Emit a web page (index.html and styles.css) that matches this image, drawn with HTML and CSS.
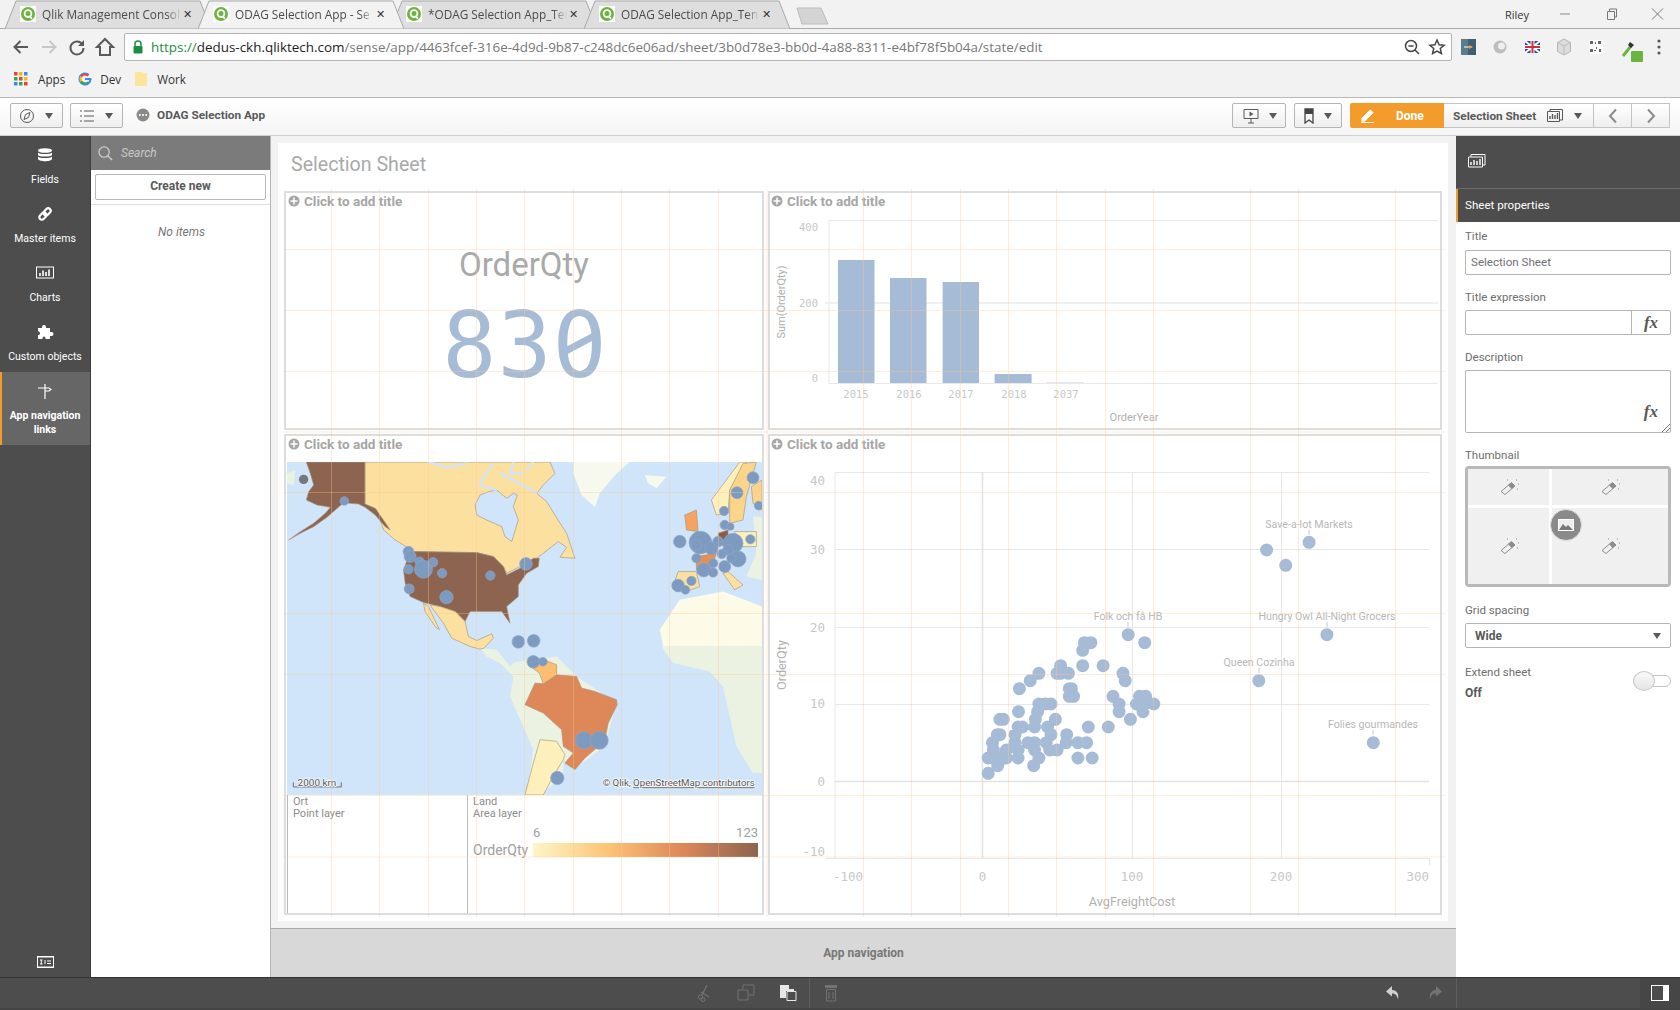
FILE: index.html
```html
<!DOCTYPE html>
<html lang="en">
<head>
<meta charset="utf-8">
<title>ODAG Selection App</title>
<link rel="stylesheet" href="styles.css">
</head>
<body>
<div class="app">

<!-- Browser tab strip -->
<header class="tabbar">
  <div class="tab">
    <svg class="tab-shape" viewBox="0 0 206 29"><path d="M0 29 11 1H195L206 29Z"/></svg>
    <svg class="favicon" viewBox="0 0 16 16"><rect width="16" height="16" fill="#fff"/><circle cx="8" cy="8" r="7" fill="#6cb33f"/><circle cx="8" cy="7.6" r="3.4" fill="none" stroke="#fff" stroke-width="1.8"/><path d="M9.5 10l2.4 2.6" stroke="#fff" stroke-width="1.8"/></svg>
    <span class="tab-text">Qlik Management Consol</span>
    <span class="tab-close">✕</span>
  </div>
  <div class="tab tab-active">
    <svg class="tab-shape" viewBox="0 0 206 29"><path d="M0 29 11 1H195L206 29Z"/></svg>
    <svg class="favicon" viewBox="0 0 16 16"><rect width="16" height="16" fill="#fff"/><circle cx="8" cy="8" r="7" fill="#6cb33f"/><circle cx="8" cy="7.6" r="3.4" fill="none" stroke="#fff" stroke-width="1.8"/><path d="M9.5 10l2.4 2.6" stroke="#fff" stroke-width="1.8"/></svg>
    <span class="tab-text">ODAG Selection App - Se</span>
    <span class="tab-close">✕</span>
  </div>
  <div class="tab">
    <svg class="tab-shape" viewBox="0 0 206 29"><path d="M0 29 11 1H195L206 29Z"/></svg>
    <svg class="favicon" viewBox="0 0 16 16"><rect width="16" height="16" fill="#fff"/><circle cx="8" cy="8" r="7" fill="#6cb33f"/><circle cx="8" cy="7.6" r="3.4" fill="none" stroke="#fff" stroke-width="1.8"/><path d="M9.5 10l2.4 2.6" stroke="#fff" stroke-width="1.8"/></svg>
    <span class="tab-text">*ODAG Selection App_Ten</span>
    <span class="tab-close">✕</span>
  </div>
  <div class="tab">
    <svg class="tab-shape" viewBox="0 0 206 29"><path d="M0 29 11 1H195L206 29Z"/></svg>
    <svg class="favicon" viewBox="0 0 16 16"><rect width="16" height="16" fill="#fff"/><circle cx="8" cy="8" r="7" fill="#6cb33f"/><circle cx="8" cy="7.6" r="3.4" fill="none" stroke="#fff" stroke-width="1.8"/><path d="M9.5 10l2.4 2.6" stroke="#fff" stroke-width="1.8"/></svg>
    <span class="tab-text">ODAG Selection App_Ten</span>
    <span class="tab-close">✕</span>
  </div>
  <svg class="newtab" viewBox="0 0 33 18"><path d="M1 1H25L32 17H6Z"/></svg>
  <div class="winctl">
    <span class="win-user">Riley</span>
    <svg class="win-ic" viewBox="0 0 46 16"><path d="M18 8H28" stroke="#8a8a8a"/></svg>
    <svg class="win-ic" viewBox="0 0 46 16"><path d="M19.500 5.500h7v8h-7zM21.500 5.500v-2.500h7v8h-2" fill="none" stroke="#777"/></svg>
    <svg class="win-ic" viewBox="0 0 46 16"><path d="M18 2.500 29 13.500M29 2.500 18 13.500" stroke="#777"/></svg>
  </div>
</header>

<!-- Address bar -->
<div class="addrbar">
  <svg class="nav-ic" viewBox="0 0 28 28"><path d="M21 14H8M13.500 8 7.500 14l6 6" fill="none" stroke="#5a5a5a" stroke-width="2"/></svg>
  <svg class="nav-ic" viewBox="0 0 28 28"><path d="M7 14H20M14.500 8l6 6-6 6" fill="none" stroke="#c8c8c8" stroke-width="2"/></svg>
  <svg class="nav-ic" viewBox="0 0 28 28"><path d="M19.500 11.500A6.500 6.500 0 1 0 20.500 15" fill="none" stroke="#5a5a5a" stroke-width="2"/><path d="M21 7v6h-6z" fill="#5a5a5a"/></svg>
  <svg class="nav-ic" viewBox="0 0 28 28"><path d="M14 6 6 14h3v8h10v-8h3z" fill="none" stroke="#5a5a5a" stroke-width="2"/></svg>
  <div class="urlbox">
    <svg class="lock" viewBox="0 0 12 14"><path d="M3 6V4a3 3 0 0 1 6 0v2" fill="none" stroke="#1e8e3e" stroke-width="1.500"/><rect x="1.500" y="6" width="9" height="7.500" rx="1" fill="#1e8e3e"/></svg>
    <span class="url"><span class="url-scheme">https://</span><span class="url-host">dedus-ckh.qliktech.com</span>/sense/app/4463fcef-316e-4d9d-9b87-c248dc6e06ad/sheet/3b0d78e3-bb0d-4a88-8311-e4bf78f5b04a/state/edit</span>
    <svg class="url-ic" viewBox="0 0 18 18"><circle cx="8" cy="8" r="5.500" fill="none" stroke="#444" stroke-width="1.500"/><path d="M5.500 8h5M12 12l4 4" stroke="#444" stroke-width="1.500"/></svg>
    <svg class="url-ic" viewBox="0 0 18 18"><path d="M9 2l2.100 4.700 5 .5-3.800 3.300 1.100 5L9 13l-4.400 2.500 1.100-5L1.900 7.200l5-.5z" fill="none" stroke="#444" stroke-width="1.500"/></svg>
  </div>
  <div class="exts">
    <svg class="ext" viewBox="0 0 32 18"><rect x="9" y="1" width="15" height="16" fill="#3f5f72"/><rect x="9" y="1" width="7" height="16" fill="#5b7b8e"/><path d="M12 9h8" stroke="#fff"/><path d="M17 7l4 2-4 2z" fill="#f39c2b"/></svg>
    <svg class="ext" viewBox="0 0 32 18"><circle cx="16" cy="9" r="6.500" fill="#bdbdbd"/><circle cx="17.500" cy="8" r="3.500" fill="#eee"/></svg>
    <svg class="ext" viewBox="0 0 32 18"><rect x="9" y="3" width="15" height="12" fill="#2b4a8b"/><path d="M9 3 24 15M24 3 9 15" stroke="#fff" stroke-width="2"/><path d="M16.500 3v12M9 9h15" stroke="#fff" stroke-width="4"/><path d="M16.500 3v12M9 9h15" stroke="#cf2e3a" stroke-width="2"/></svg>
    <svg class="ext" viewBox="0 0 32 18"><path d="M16 1l6.500 3.500v9L16 17l-6.500-3.500v-9z" fill="#dcdcdc" stroke="#b5b5b5"/><path d="M16 8v9M9.500 4.500 16 8l6.500-3.500" fill="none" stroke="#bdbdbd"/></svg>
    <svg class="ext" viewBox="0 0 32 18"><rect x="9" y="2" width="14" height="14" fill="#fff"/><path d="M10 3h3v3h-3zM18 3h3v3h-3zM10 11h3v3h-3zM16 9h1v2h-1zM19 11h2v3h-2zM15 4h1v2h-1zM14 12h2v1h-2z" fill="#666"/></svg>
    <svg class="ext" viewBox="0 0 32 24"><path d="M11 18 19 8" stroke="#6cb33f" stroke-width="3"/><path d="M18 4l4 3-3 3-3-3z" fill="#333"/><rect x="19" y="13" width="12" height="11" rx="1" fill="#6cb33f"/></svg>
    <svg class="ext ext-menu" viewBox="0 0 30 18"><circle cx="15" cy="3" r="1.600" fill="#5a5a5a"/><circle cx="15" cy="9" r="1.600" fill="#5a5a5a"/><circle cx="15" cy="15" r="1.600" fill="#5a5a5a"/></svg>
  </div>
</div>

<!-- Bookmarks -->
<div class="bookmarks">
  <svg class="bm-apps" viewBox="0 0 14 14"><path d="M0 0h3.500v3.500H0z" fill="#e94335"/><path d="M5 0h3.500v3.500H5z" fill="#fbbc05"/><path d="M10 0h3.500v3.500H10z" fill="#4285f4"/><path d="M0 5h3.500v3.500H0z" fill="#34a853"/><path d="M5 5h3.500v3.500H5z" fill="#e94335"/><path d="M10 5h3.500v3.500H10z" fill="#fbbc05"/><path d="M0 10h3.500v3.500H0z" fill="#4285f4"/><path d="M5 10h3.500v3.500H5z" fill="#34a853"/><path d="M10 10h3.500v3.500H10z" fill="#e94335"/></svg>
  <span class="bm-text bm-apps-t">Apps</span>
  <svg class="bm-g" viewBox="0 0 14 14"><path d="M7 7h5.500A5.500 5.500 0 1 1 10.800 3" fill="none" stroke="#4285f4" stroke-width="2"/><path d="M10.800 3A5.500 5.500 0 0 0 2.400 4L4 5.300A3.500 3.500 0 0 1 9.500 4.600z" fill="#ea4335"/><path d="M2.400 4a5.500 5.500 0 0 0 0 6l1.700-1.300a3.500 3.500 0 0 1 0-3.400z" fill="#fbbc05"/><path d="M2.400 10a5.500 5.500 0 0 0 8.500.9L9.400 9.500a3.500 3.500 0 0 1-5.300-.8z" fill="#34a853"/></svg>
  <span class="bm-text bm-dev">Dev</span>
  <svg class="bm-folder" viewBox="0 0 12 14"><path d="M0 0h7l1 1h4v13H0z" fill="#fce49c"/></svg>
  <span class="bm-text">Work</span>
</div>

<!-- Qlik toolbar -->
<div class="apptoolbar">
  <button class="tbtn tbtn-a">
    <svg class="tb-ic" viewBox="0 0 16 16"><circle cx="8" cy="8" r="6.500" fill="none" stroke="#595959"/><path d="M11 4.500 9.500 9.500 5 11.500 6.500 6.500z" fill="none" stroke="#595959"/></svg>
    <span class="caret"></span>
  </button>
  <button class="tbtn tbtn-a tbtn-list">
    <svg class="tb-ic" viewBox="0 0 16 16"><path d="M1 3h2M5 3h10M1 8h2M5 8h10M1 13h2M5 13h10" stroke="#595959"/></svg>
    <span class="caret"></span>
  </button>
  <svg class="app-sphere" viewBox="0 0 14 14"><circle cx="7" cy="7" r="6.500" fill="#8a8a8a"/><circle cx="3.800" cy="7" r="1" fill="#fff"/><circle cx="7" cy="7" r="1" fill="#fff"/><circle cx="10.200" cy="7" r="1" fill="#fff"/></svg>
  <span class="app-name">ODAG Selection App</span>
  <div class="tb-right">
    <button class="tbtn tbtn-present">
      <svg class="tb-ic" viewBox="0 0 16 16"><path d="M1 1.500h14v9H1zM8 10.500V15M5 15h6" fill="none" stroke="#595959"/><path d="M6.500 3.500l4 2.500-4 2.500z" fill="#595959"/></svg>
      <span class="caret"></span>
    </button>
    <button class="tbtn tbtn-mark">
      <svg class="tb-ic" viewBox="0 0 16 16"><path d="M4 1h8v14l-4-3-4 3z" fill="none" stroke="#444" stroke-width="1.300"/><path d="M4 1h8v5H4z" fill="#444"/></svg>
      <span class="caret"></span>
    </button>
    <div class="tgroup">
      <button class="t-done">
        <svg class="done-ic" viewBox="0 0 16 16"><path d="M2 11 11 2l3 3-9 9H2zM1 15.500h14" fill="#fff" stroke="#fff"/></svg>
        <span class="done-text">Done</span>
      </button>
      <button class="t-sheet">
        <span class="t-sheet-name">Selection Sheet</span>
        <svg class="sheet-ic" viewBox="0 0 16 14"><path d="M.500 2.500h12v10h-12zM3 2V.500h12.500V11H13" fill="none" stroke="#595959"/><path d="M3 10V7M5.500 10V5M8 10V6M10.500 10V4" stroke="#595959" stroke-width="1.400"/></svg>
        <span class="caret"></span>
      </button>
      <button class="t-nav"><svg class="nav-arrow" viewBox="0 0 10 16"><path d="M8 1.500 2 8l6 6.500" fill="none" stroke="#8c8c8c" stroke-width="2"/></svg></button>
      <button class="t-nav"><svg class="nav-arrow" viewBox="0 0 10 16"><path d="M2 1.500 8 8l-6 6.500" fill="none" stroke="#8c8c8c" stroke-width="2"/></svg></button>
    </div>
  </div>
</div>

<div class="workspace">

  <!-- Left navigation -->
  <nav class="sidebar">
    <div class="side-item">
      <svg class="side-ic" viewBox="0 0 16 14"><ellipse cx="8" cy="2.500" rx="7" ry="2.300" fill="#fff"/><path d="M1 4.500c1 2 13 2 14 0V7c-1 2-13 2-14 0zM1 8.500c1 2 13 2 14 0V11c-1 3-13 3-14 0z" fill="#fff"/></svg>
      <span class="side-label">Fields</span>
    </div>
    <div class="side-item">
      <svg class="side-ic" viewBox="0 0 16 14"><g fill="none" stroke="#fff" stroke-width="2.200" transform="rotate(-45 8 7)"><rect x="1" y="4.500" width="8" height="5" rx="2.500"/><rect x="7" y="4.500" width="8" height="5" rx="2.500"/></g></svg>
      <span class="side-label">Master items</span>
    </div>
    <div class="side-item">
      <svg class="side-ic" viewBox="0 0 18 14"><rect x=".500" y="1" width="17" height="11" fill="none" stroke="#fff"/><path d="M4 10V7M7 10V4.500M10 10V6M13 10V3.500" stroke="#fff" stroke-width="1.600"/></svg>
      <span class="side-label">Charts</span>
    </div>
    <div class="side-item">
      <svg class="side-ic" viewBox="0 0 16 14"><path d="M1 3h4V2a2 2 0 0 1 4 0v1h4v4h1.500a2 2 0 0 1 0 4H13v3H8.500v-1a1.500 1.500 0 0 0-3 0v1H1v-4h1a2 2 0 0 0 0-3.500H1z" fill="#fff"/></svg>
      <span class="side-label">Custom objects</span>
    </div>
    <div class="side-item side-active">
      <svg class="side-ic" viewBox="0 0 16 14"><path d="M8 0V15M1 4h11l2 1.500L12 7H8M3 4 1 4" fill="none" stroke="#fff" stroke-width="1.200"/></svg>
      <span class="side-label side-strong">App navigation links</span>
    </div>
    <svg class="side-foot" viewBox="0 0 17 12"><rect width="17" height="12" fill="#fff"/><rect x="1" y="1.500" width="15" height="9" fill="#4d4d4d"/><path d="M3 4h2.500M3 8h2.500M4.300 4v4M8 4v4M10 5h4M10 7.500h4" stroke="#fff"/></svg>
  </nav>

  <!-- Assets panel -->
  <aside class="assets">
    <div class="asset-search">
      <svg class="search-ic" viewBox="0 0 16 16"><circle cx="6.500" cy="6.500" r="5.500" fill="none" stroke="#ccc" stroke-width="1.300"/><path d="M10.500 10.500 15 15" stroke="#ccc" stroke-width="1.500"/></svg>
      <span class="search-text">Search</span>
    </div>
    <div class="asset-actions"><button class="create-btn">Create new</button></div>
    <p class="no-items">No items</p>
  </aside>

  <!-- Sheet -->
  <main class="main">
    <div class="sheet-wrap">
      <section class="sheet">
        <h1 class="sheet-title">Selection Sheet</h1>
        <div class="grid">

          <article class="object">
            <div class="obj-title"><svg class="plus" viewBox="0 0 12 12"><circle cx="6" cy="6" r="5.500" fill="#a6a6a6"/><path d="M2.500 6h7M6 2.500v7" stroke="#fff" stroke-width="1.500"/></svg>Click to add title</div>
            <div class="kpi">
              <div class="kpi-label">OrderQty</div>
              <div class="kpi-value">83<span class="kpi-zero">0</span></div>
            </div>
          </article>

          <article class="object">
            <div class="obj-title"><svg class="plus" viewBox="0 0 12 12"><circle cx="6" cy="6" r="5.500" fill="#a6a6a6"/><path d="M2.500 6h7M6 2.500v7" stroke="#fff" stroke-width="1.500"/></svg>Click to add title</div>
            <svg class="chart chart-bar" viewBox="770 219 668 209">
              <path class="grid-l" d="M829 220.500H1438M829 383.500H1438M829 220V384"/>
              <path class="grid-b" d="M825 303H1438"/>
              <path class="bar" d="M838 260h36.500v123H838zM890 278h36.500v105H890zM942.600 282H979v101h-36.400zM994.600 374h37v9h-37z"/>
              <path class="bar bar-faint" d="M1046.700 382h37v1.500h-37z"/>
              <g class="mono-s">
                <text x="818" y="231" text-anchor="end">400</text>
                <text x="818" y="307" text-anchor="end">200</text>
                <text x="818" y="382" text-anchor="end">0</text>
                <text x="856" y="398" text-anchor="middle">2015</text>
                <text x="909" y="398" text-anchor="middle">2016</text>
                <text x="961" y="398" text-anchor="middle">2017</text>
                <text x="1014" y="398" text-anchor="middle">2018</text>
                <text x="1066" y="398" text-anchor="middle">2037</text>
              </g>
              <text class="axis-t" x="1134" y="421" text-anchor="middle">OrderYear</text>
              <text class="axis-t" transform="translate(785 302) rotate(-90)" text-anchor="middle">Sum(OrderQty)</text>
            </svg>
          </article>

          <article class="object">
            <div class="obj-title"><svg class="plus" viewBox="0 0 12 12"><circle cx="6" cy="6" r="5.500" fill="#a6a6a6"/><path d="M2.500 6h7M6 2.500v7" stroke="#fff" stroke-width="1.500"/></svg>Click to add title</div>
            <svg class="map" viewBox="20 96 1427 1000">
              <rect x="20" y="96" width="1427" height="1000" fill="#d0e5fa"/>
              <!-- Pale land -->
              <path class="pale" d="M880 96H1050L1010 130 960 190 945 232 905 195 880 130Z"/>
              <path class="pale" d="M1095 135 1160 140 1130 175 1105 160Z"/>
              <path class="sand" d="M1140 600 1200 510 1330 485 1447 530V650H1150Z"/>
              <path class="green" d="M1145 650H1447V1030H1420L1370 950 1330 770 1290 725 1180 700Z"/>
              <path class="green" d="M1420 260H1447V450L1400 440 1430 370Z"/>
              <path class="green" d="M600 655 650 660 690 710 700 700 740 690 830 680 890 740 1010 820 975 950 880 1020 850 990 850 1040 780 1096H740L760 960 690 800 700 740 660 700 620 680Z"/>
              <path class="green" d="M20 130 45 120 40 165 20 160Z"/>
              <!-- Choropleth -->
              <g class="coast">
                <path fill="#fce0a0" d="M254 96H810L825 130 790 165 770 190 800 215 825 255 860 310 885 385 840 382 860 352 835 335 790 370 770 385 720 410 680 430 670 410 640 380 590 368 400 365 370 345 345 330 310 300 290 240 254 222Z"/>
                <path fill="#d0e5fa" d="M585 225 600 195 625 185 650 180 680 205 700 190 712 195 700 230 715 270 695 335 675 320 665 290 620 270 590 255Z"/>
                <path class="channel" d="M445 96 500 112 560 100M640 100 610 140 600 165 650 180M660 130 700 150 770 190M700 96 690 130 730 130M760 96 740 120"/>
                <path fill="#8c6450" d="M78 96H254V222L285 235 320 285 330 300 315 290 285 255 255 232 235 222 190 218 165 240 140 262 100 290 60 310 25 330 60 305 100 280 135 250 150 232 110 225 78 210 85 185 100 165 90 130Z"/>
                <path fill="#8c6450" d="M400 365 590 368 640 380 670 410 680 435 720 415 760 385 778 385 775 410 740 430 715 465 715 500 680 530 690 580 665 545 620 545 570 545 555 575 525 545 480 530 430 518 390 500 375 460 370 420 385 380Z"/>
                <path fill="#fce0a0" d="M450 525 480 530 525 545 555 575 565 620 590 632 635 612 640 625 612 655 600 658 570 650 515 625 490 580 460 540Z"/>
                <path fill="#fce0a0" d="M430 520 445 530 478 600 465 590 435 545Z"/>
                <path fill="#de8859" d="M890 740 905 775 945 785 1010 810 1012 825 985 880 975 930 950 955 915 985 885 1020 855 1000 880 970 850 950 845 900 790 850 735 825 765 760 790 762 830 735Z"/>
                <path fill="#fdbe6f" d="M745 705 780 685 830 705 830 735 790 762 778 730Z"/>
                <path fill="#fdf0bb" d="M780 930 830 935 855 975 850 990 820 1040 790 1096H735L760 1000Z"/>
                <path fill="#fdf0bb" d="M1295 210 1380 96H1400L1350 180 1345 250 1310 255Z"/>
                <path fill="#fcd58a" d="M1350 180 1390 100 1430 96 1400 200 1390 270 1350 280Z"/>
                <path fill="#fcd58a" d="M1415 170 1447 150V240L1420 220Z"/>
                <path fill="#f4a460" d="M1215 255 1250 240 1255 305 1220 300Z"/>
                <path fill="#fdf0bb" d="M1365 305 1430 305 1430 350 1375 350Z"/>
                <path fill="#ed8d50" d="M1250 380 1310 370 1290 430 1250 420Z"/>
                <path fill="#8c5a45" d="M1315 310 1345 300 1345 350 1320 345Z"/>
                <path fill="#fce0a0" d="M1195 425 1250 425 1260 470 1220 485 1180 470Z"/>
                <path fill="#fce0a0" d="M1345 425 1390 465 1365 480 1330 430Z"/>
              </g>
              <!-- Bubbles -->
              <circle class="bub-dim" cx="70" cy="148" r="14"/>
              <g class="bub">
                <circle cx="192" cy="213" r="13"/><circle cx="385" cy="365" r="16"/><circle cx="390" cy="380" r="18"/><circle cx="385" cy="418" r="14"/><circle cx="418" cy="395" r="14"/><circle cx="430" cy="418" r="27"/><circle cx="459" cy="397" r="14"/><circle cx="486" cy="430" r="14"/><circle cx="387" cy="477" r="15"/><circle cx="499" cy="502" r="20"/><circle cx="631" cy="437" r="14"/><circle cx="738" cy="402" r="19"/>
                <circle cx="715" cy="636" r="19"/><circle cx="761" cy="633" r="19"/><circle cx="760" cy="696" r="19"/><circle cx="789" cy="696" r="13"/>
                <circle cx="912" cy="932" r="26"/><circle cx="958" cy="932" r="27"/><circle cx="832" cy="1045" r="20"/>
                <circle cx="1420" cy="143" r="18"/><circle cx="1372" cy="188" r="18"/><circle cx="1437" cy="227" r="13"/><circle cx="1333" cy="243" r="14"/><circle cx="1335" cy="285" r="14"/><circle cx="1352" cy="290" r="11"/><circle cx="1412" cy="328" r="14"/><circle cx="1200" cy="335" r="19"/><circle cx="1262" cy="338" r="34"/><circle cx="1250" cy="345" r="16"/><circle cx="1295" cy="355" r="20"/><circle cx="1315" cy="335" r="16"/><circle cx="1360" cy="340" r="30"/><circle cx="1345" cy="360" r="16"/><circle cx="1250" cy="385" r="14"/><circle cx="1300" cy="400" r="14"/><circle cx="1326" cy="372" r="14"/><circle cx="1375" cy="387" r="24"/><circle cx="1355" cy="385" r="14"/><circle cx="1335" cy="410" r="18"/><circle cx="1272" cy="420" r="21"/><circle cx="1300" cy="428" r="14"/><circle cx="1195" cy="467" r="19"/><circle cx="1217" cy="480" r="13"/><circle cx="1235" cy="453" r="14"/>
              </g>
              <path class="scale" d="M39 1058v14H183V1058"/>
              <text class="map-t" x="110" y="1069" text-anchor="middle">2000 km</text>
              <text class="map-t map-credit" x="1425" y="1070" text-anchor="end">© Qlik, <tspan class="map-link">OpenStreetMap contributors</tspan></text>
            </svg>
            <div class="legend">
              <div class="leg-col leg-left">
                <div class="leg-name">Ort</div>
                <div class="leg-name">Point layer</div>
              </div>
              <div class="leg-col leg-right">
                <div class="leg-name">Land</div>
                <div class="leg-name">Area layer</div>
                <div class="scale-range"><span>6</span><span>123</span></div>
                <div class="scale-row"><span class="scale-name">OrderQty</span><span class="scale-bar"></span></div>
              </div>
            </div>
          </article>

          <article class="object">
            <div class="obj-title"><svg class="plus" viewBox="0 0 12 12"><circle cx="6" cy="6" r="5.500" fill="#a6a6a6"/><path d="M2.500 6h7M6 2.500v7" stroke="#fff" stroke-width="1.500"/></svg>Click to add title</div>
            <svg class="chart chart-scatter" viewBox="770 462 668 450">
              <path class="grid-l" d="M835 472.500H1429M835 549.500H1429M835 627.500H1429M835 704.500H1429M835 858.500H1429M835 472V858M1132.500 472V858M1281.500 472V858M1429.500 858V865M825 858.500H835"/>
              <path class="grid-z" d="M835 781.500H1429M982.500 472V858"/>
              <path class="dots" d="M988.200 773.300h0M997.700 765.700h0M1033.700 765.700h0M988.200 758h0M1006.400 758h0M1018.100 758h0M1038.900 758h0M1077.900 758h0M1092.200 758h0M999.900 758h0M993.400 750h0M1006.400 750h0M1018.100 750h0M1034.600 750h0M1049.700 750h0M1057.100 750h0M992.500 742.700h0M1015 742.700h0M1028 742.700h0M1034.600 742.700h0M1046.300 742.700h0M1066.200 742.700h0M1077.900 742.700h0M1086.600 742.700h0M999.900 734.700h0M997.300 734.700h0M1015 734.700h0M1051 734.700h0M1066.700 734.700h0M1018.100 727h0M1022.400 727h0M1034.600 727h0M1047.600 727h0M1088.300 727h0M1108.300 727h0M999.900 719.300h0M1003.300 719.300h0M1035.400 719.300h0M1055.400 719.300h0M1130.400 719.300h0M1018.500 711.700h0M1037.600 711.700h0M1119.100 711.700h0M1143 711.700h0M1038.900 704h0M1045.400 704h0M1051 704h0M1119.100 704h0M1136.500 704h0M1153.800 704h0M1145.100 704h0M1069.300 696.300h0M1073.600 696.300h0M1113 696.300h0M1139.500 696.300h0M1145.600 696.300h0M1019.400 688.700h0M1069.300 688.700h0M1071.400 688.700h0M1030.200 680.700h0M1125.200 680.700h0M1258.800 680.700h0M1038.900 673.300h0M1057.100 673.300h0M1060.600 673.300h0M1068.400 673.300h0M1123 673.300h0M1060.600 665.700h0M1082.700 665.700h0M1103.100 665.700h0M1082.700 650.300h0M1084.400 642.700h0M1090.900 642.700h0M1144.700 642.700h0M1128.200 634.700h0M1326.900 634.700h0M1373.300 742.700h0M1285.700 565.300h0M1266.600 550h0M1309.100 542.300h0"/>
              <path class="ticks" d="M1309 530v5M1128 622v5M1327 622v5M1259 668v5M1373 730v5"/>
              <g class="dot-label">
                <text x="1309" y="528" text-anchor="middle">Save-a-lot Markets</text>
                <text x="1128" y="620" text-anchor="middle">Folk och få HB</text>
                <text x="1327" y="620" text-anchor="middle">Hungry Owl All-Night Grocers</text>
                <text x="1259" y="666" text-anchor="middle">Queen Cozinha</text>
                <text x="1373" y="728" text-anchor="middle">Folies gourmandes</text>
              </g>
              <g class="mono-m">
                <text x="825" y="485" text-anchor="end">40</text>
                <text x="825" y="554" text-anchor="end">30</text>
                <text x="825" y="632" text-anchor="end">20</text>
                <text x="825" y="708" text-anchor="end">10</text>
                <text x="825" y="786" text-anchor="end">0</text>
                <text x="825" y="856" text-anchor="end">-10</text>
                <text x="848" y="881" text-anchor="middle">-100</text>
                <text x="982.500" y="881" text-anchor="middle">0</text>
                <text x="1132" y="881" text-anchor="middle">100</text>
                <text x="1281" y="881" text-anchor="middle">200</text>
                <text x="1429" y="881" text-anchor="end">300</text>
              </g>
              <text class="axis-m" x="1132" y="906" text-anchor="middle">AvgFreightCost</text>
              <text class="axis-m" transform="translate(786 665) rotate(-90)" text-anchor="middle">OrderQty</text>
            </svg>
          </article>
        </div>

        <!-- Edit-mode snapping grid, drawn over the objects -->
        <svg class="snap-grid" viewBox="278 143 1170 778">
          <path class="snap-h" d="M283 249.500H1445M283 310.500H1445M283 371.500H1445M283 432H1445M283 492.500H1445M283 613.500H1445M283 674.500H1445M283 795.500H1445M283 857H1445"/>
          <path class="snap-v" d="M331.500 189V917M379.500 189V917M428.500 189V917M476.500 189V917M524.500 189V917M573.500 189V917M621.500 189V917M669.500 189V917M718.500 189V917M767 189V917M863.500 189V917M911.500 189V917M960.500 189V917M1008.500 189V917M1056.500 189V917M1105.500 189V917M1153.500 189V917M1250.500 189V917M1298.500 189V917M1395.500 189V917"/>
        </svg>
      </section>
    </div>
    <div class="appnav">App navigation</div>
  </main>

  <!-- Properties panel -->
  <aside class="props">
    <div class="props-head">
      <svg class="props-ic" viewBox="0 0 18 14"><path d="M.500 3h14v10H.500z" fill="#4d4d4d" stroke="#fff"/><path d="M3 2.500V.500h14V11h-2" fill="none" stroke="#fff"/><path d="M3 11V8M6 11V6M9 11V7M12 11V5" stroke="#fff" stroke-width="1.400"/></svg>
    </div>
    <div class="props-section">Sheet properties</div>
    <div class="props-body">
      <label class="p-label">Title</label>
      <div class="p-input">Selection Sheet</div>
      <label class="p-label">Title expression</label>
      <div class="p-input p-expr"><span class="p-expr-box"></span><span class="fx fx-btn">fx</span></div>
      <label class="p-label">Description</label>
      <div class="p-area"><span class="fx fx-area">fx</span>
        <svg class="resize" viewBox="0 0 8 8"><path d="M0 8 8 0M4 8 8 4" stroke="#777"/></svg>
      </div>
      <label class="p-label p-label-tight">Thumbnail</label>
      <div class="thumb">
        <div class="thumb-cell"><svg class="wand" viewBox="0 0 20 16"><path d="M2 12.500 12.500 3.500 16 7 6 15.500z" fill="none" stroke="#8c8c8c"/><path d="M9 6 12.500 3.500 16 7 12.500 10z" fill="#8c8c8c"/><path d="M8 1h1M17 1h1M19 5h1M18 10h1" stroke="#8c8c8c"/></svg></div>
        <div class="thumb-cell"><svg class="wand" viewBox="0 0 20 16"><path d="M2 12.500 12.500 3.500 16 7 6 15.500z" fill="none" stroke="#8c8c8c"/><path d="M9 6 12.500 3.500 16 7 12.500 10z" fill="#8c8c8c"/><path d="M8 1h1M17 1h1M19 5h1M18 10h1" stroke="#8c8c8c"/></svg></div>
        <div class="thumb-cell"><svg class="wand" viewBox="0 0 20 16"><path d="M2 12.500 12.500 3.500 16 7 6 15.500z" fill="none" stroke="#8c8c8c"/><path d="M9 6 12.500 3.500 16 7 12.500 10z" fill="#8c8c8c"/><path d="M8 1h1M17 1h1M19 5h1M18 10h1" stroke="#8c8c8c"/></svg></div>
        <div class="thumb-cell"><svg class="wand" viewBox="0 0 20 16"><path d="M2 12.500 12.500 3.500 16 7 6 15.500z" fill="none" stroke="#8c8c8c"/><path d="M9 6 12.500 3.500 16 7 12.500 10z" fill="#8c8c8c"/><path d="M8 1h1M17 1h1M19 5h1M18 10h1" stroke="#8c8c8c"/></svg></div>
        <div class="thumb-badge"><svg class="thumb-pic" viewBox="0 0 16 12"><rect x=".500" y=".500" width="15" height="11" fill="#eee" stroke="#fff"/><path d="M1 11 5 5l3 3 2-2 5 5z" fill="#777"/></svg></div>
      </div>
      <label class="p-label p-label-gap">Grid spacing</label>
      <div class="p-select"><span>Wide</span><span class="caret caret-dark"></span></div>
      <div class="extend">
        <div>
          <div class="ext-label">Extend sheet</div>
          <div class="ext-state">Off</div>
        </div>
        <div class="toggle"><span class="toggle-knob"></span></div>
      </div>
    </div>
  </aside>
</div>

<!-- Bottom action bar -->
<footer class="bottombar">
  <span class="bb-btn"><svg class="bb-ic" viewBox="0 0 14 18"><path d="M10 1 5 11M4 8l8 5" fill="none" stroke="#737373" stroke-width="1.200"/><circle cx="3.500" cy="13" r="2.200" fill="none" stroke="#737373"/><circle cx="6" cy="15.500" r="2" fill="none" stroke="#737373"/></svg></span>
  <span class="bb-btn"><svg class="bb-ic" viewBox="0 0 18 18"><path d="M1 6h10v10H1zM6 5V1h11v10h-5" fill="none" stroke="#737373"/></svg></span>
  <span class="bb-btn"><svg class="bb-ic" viewBox="0 0 18 18"><path d="M1 1h9v4h5v2H7v7H1z" fill="#e6e6e6"/><path d="M8 7.500h9v9H8z" fill="none" stroke="#e6e6e6"/></svg></span>
  <span class="bb-sep"></span>
  <span class="bb-btn"><svg class="bb-ic" viewBox="0 0 14 18"><path d="M1 1h12v3H1z" fill="#737373"/><path d="M2.500 5.500h9V17h-9zM5 8v7M9 8v7" fill="none" stroke="#737373"/></svg></span>
  <span class="bb-spacer"></span>
  <span class="bb-btn"><svg class="bb-ic" viewBox="0 0 16 18"><path d="M7 2 1 7.500l6 5V9.500c3 0 5 1.500 6 6 1-6-1-9-6-9.500z" fill="#d0d0d0"/></svg></span>
  <span class="bb-btn"><svg class="bb-ic" viewBox="0 0 16 18"><path d="M9 2l6 5.500-6 5V9.500c-3 0-5 1.500-6 6-1-6 1-9 6-9.500z" fill="#737373"/></svg></span>
  <span class="bb-sep"></span>
  <span class="bb-gap"></span>
  <span class="bb-toggle"><svg class="bb-ic" viewBox="0 0 18 16"><rect x=".500" y=".500" width="17" height="15" fill="#4d4d4d" stroke="#fff"/><rect x="12" y="1" width="5" height="14" fill="#fff"/></svg></span>
</footer>
</div>
</body>
</html>
```
FILE: styles.css
```css
* { box-sizing: border-box; }
html, body { margin: 0; height: 100%; overflow: hidden; }
body { font-family: Roboto, "Liberation Sans", sans-serif; color: #595959; background: #f2f2f2; }
button { font: inherit; padding: 0; margin: 0; }
h1, p { margin: 0; font-weight: 400; }
svg { display: block; flex: none; }

.app { width: 1680px; height: 1010px; display: flex; flex-direction: column; }

/* Browser chrome */
.tabbar { height: 29px; padding-left: 5px; display: flex; align-items: flex-start; background: #f2f2f2; border-bottom: 1px solid #ababab; flex: none; }
.tab { position: relative; width: 206px; height: 29px; margin-right: -13px; flex: none; display: flex; align-items: center; padding: 0 0 1px 15px; font-family: "Open Sans", sans-serif; font-size: 11.8px; color: #4a4a4a; }
.tab-shape { position: absolute; inset: 0; width: 206px; height: 29px; }
.tab-shape path { fill: #dedede; stroke: #a8a8a8; }
.tab-active { z-index: 2; }
.tab-active .tab-shape path { fill: #f2f2f2; }
.favicon { position: relative; width: 16px; height: 16px; }
.tab-text { position: relative; margin-left: 6px; width: 139px; white-space: nowrap; overflow: hidden; -webkit-mask-image: linear-gradient(90deg, #000 90%, transparent); mask-image: linear-gradient(90deg, #000 90%, transparent); }
.tab-close { position: relative; margin-left: 2px; font-size: 11px; font-weight: 700; color: #333; font-family: "DejaVu Sans", sans-serif; }
.newtab { width: 33px; height: 18px; margin: 7px 0 0 19px; }
.newtab path { fill: #d4d4d4; stroke: #bcbcbc; }
.winctl { margin-left: auto; display: flex; align-items: center; height: 28px; padding-right: 0; }
.win-user { font-family: "Open Sans", sans-serif; font-size: 11px; color: #333; margin-right: 13px; }
.win-ic { width: 46px; height: 16px; }

.addrbar { height: 34px; padding: 4px 6px 0 7px; display: flex; align-items: flex-start; flex: none; background: #f2f2f2; }
.nav-ic { width: 28px; height: 28px; }
.urlbox { margin-left: 5px; width: 1328px; height: 28px; background: #fff; border: 1px solid #b5b5b5; border-radius: 2px; display: flex; align-items: center; padding: 0 5px 0 7px; }
.lock { width: 12px; height: 14px; }
.url { margin-left: 7px; flex: 1; font-family: "Open Sans", sans-serif; font-size: 13.43px; color: #777; white-space: nowrap; overflow: hidden; }
.url-scheme { color: #1e8e3e; }
.url-host { color: #222; }
.url-ic { width: 18px; height: 18px; margin-left: 7px; }
.exts { display: flex; align-items: center; height: 28px; }
.ext { width: 32px; height: 18px; }
.ext:nth-child(6) { height: 24px; margin-top: 5px; }
.ext-menu { width: 30px; }

.bookmarks { height: 34px; padding: 0 0 3px 14px; display: flex; align-items: center; flex: none; background: #f2f2f2; }
.bm-apps { width: 14px; height: 14px; }
.bm-text { font-family: "Open Sans", sans-serif; font-size: 11.7px; color: #333; }
.bm-apps-t { margin-left: 10px; }
.bm-g { width: 14px; height: 14px; margin-left: 13px; }
.bm-dev { margin-left: 8px; }
.bm-folder { width: 12px; height: 14px; margin-left: 14px; margin-right: 10px; }

/* App toolbar */
.apptoolbar { height: 39px; padding: 5px 10px 0 10px; display: flex; align-items: flex-start; flex: none; background: linear-gradient(#fff, #f5f5f5); border-top: 1px solid #b8b8b8; border-bottom: 1px solid #cfcfcf; }
.tbtn { height: 25px; border: 1px solid #b5b5b5; border-radius: 2px; background: linear-gradient(#fff, #eee); display: flex; align-items: center; }
.tbtn-a { width: 53px; padding-left: 8px; }
.tbtn-list { margin-left: 7px; }
.tb-ic { width: 16px; height: 16px; }
.caret { width: 0; height: 0; border-left: 4.5px solid transparent; border-right: 4.5px solid transparent; border-top: 6px solid #595959; margin-left: 10px; flex: none; }
.app-sphere { width: 14px; height: 14px; margin: 5px 0 0 13px; }
.app-name { margin: 4px 0 0 7px; font-size: 11.8px; font-weight: 700; color: #595959; line-height: 16px; }
.tb-right { margin-left: auto; display: flex; gap: 8px; }
.tbtn-present { width: 54px; padding-left: 10px; }
.tbtn-mark { width: 48px; padding-left: 6px; }
.tbtn-mark .caret { margin-left: 7px; }
.tgroup { display: flex; height: 25px; }
.t-done { width: 94px; border: 0; border-radius: 2px 0 0 2px; background: #f39c2b; display: flex; align-items: center; padding-left: 10px; color: #fff; }
.done-ic { width: 15px; height: 15px; }
.done-text { font-weight: 700; font-size: 12px; margin-left: 21px; }
.t-sheet { width: 150px; border: 1px solid #c4c4c4; border-left: 0; background: linear-gradient(#fff, #eee); display: flex; align-items: center; padding-left: 9px; }
.t-sheet-name { font-size: 11.8px; font-weight: 700; color: #595959; white-space: nowrap; }
.sheet-ic { width: 16px; height: 14px; margin-left: 11px; }
.t-sheet .caret { margin-left: 11px; }
.t-nav { width: 38px; border: 1px solid #c4c4c4; border-left: 0; background: linear-gradient(#fff, #eee); display: flex; align-items: center; justify-content: center; }
.nav-arrow { width: 10px; height: 16px; }

/* Workspace */
.workspace { flex: 1; min-height: 0; display: flex; }

.sidebar { width: 91px; flex: none; background: #4d4d4d; display: flex; flex-direction: column; border-right: 1px solid #3d3d3d; }
.side-item { height: 59px; display: flex; flex-direction: column; align-items: center; padding-top: 12px; flex: none; }
.side-ic { width: 16px; height: 14px; overflow: visible; }
.side-item:nth-child(3) .side-ic { width: 18px; }
.side-label { margin-top: 11px; font-size: 10.5px; line-height: 14px; color: #fff; text-align: center; white-space: nowrap; }
.side-active { height: 73px; background: #666; border-left: 2px solid #f39c2b; padding-right: 2px; }
.side-active .side-label { white-space: normal; width: 76px; }
.side-strong { font-weight: 700; }
.side-foot { width: 17px; height: 12px; margin: auto auto 9px; }

.assets { width: 180px; flex: none; background: #fff; border-right: 1px solid #b5b5b5; }
.asset-search { height: 34px; background: #7b7b7b; display: flex; align-items: center; padding-left: 7px; }
.search-ic { width: 15px; height: 15px; }
.search-text { margin-left: 8px; font-size: 12px; font-style: italic; color: #c8c8c8; }
.asset-actions { padding: 4px; border-bottom: 1px solid #ddd; }
.create-btn { display: block; width: 171px; height: 26px; padding-bottom: 2px; background: #fff; border: 1px solid #b8b8b8; border-radius: 2px; font-size: 12px; font-weight: 700; color: #595959; }
.no-items { margin-top: 19px; padding-left: 2px; text-align: center; font-size: 12px; line-height: 16px; font-style: italic; color: #777; }

.main { flex: 1; min-width: 0; display: flex; flex-direction: column; background: #f2f2f2; }
.sheet-wrap { flex: 1; min-height: 0; padding: 7px 8px 7px 7px; }
.sheet { position: relative; height: 778px; background: #fff; padding: 0 6px; }
.sheet-title { height: 48px; padding: 9px 0 0 7px; font-size: 19.6px; line-height: 26px; color: #a9a9a9; }
.grid { display: grid; grid-template-columns: 480px 674px; grid-template-rows: 239px 481px; gap: 4px; }
.object { border: 2px solid #ddd; display: flex; flex-direction: column; background: #fff; min-width: 0; overflow: hidden; }
.obj-title { height: 26px; flex: none; display: flex; align-items: center; padding: 0 0 10px 2px; font-size: 13.5px; font-weight: 700; color: #a6a6a6; line-height: 15px; }
.object:nth-child(even) .obj-title { padding-left: 1px; }
.plus { width: 12px; height: 12px; margin-right: 4px; }

.kpi { flex: 1; text-align: center; padding-top: 28px; }
.kpi-label { font-size: 33px; line-height: 36px; color: #a9a9a9; }
.kpi-value { margin-top: 18px; padding-left: 2px; font-family: "DejaVu Sans Mono", monospace; font-size: 90px; line-height: 90px; letter-spacing: 1px; color: #a6bcd6; }
.kpi-zero { position: relative; }
.kpi-zero::before { content: ""; position: absolute; left: 50%; top: .563em; width: .2em; height: .2em; margin: -.1em 0 0 -.1em; border-radius: 50%; background: #fff; }
.kpi-zero::after { content: ""; position: absolute; left: 50%; top: .563em; width: .42em; height: .075em; margin: -.0375em 0 0 -.21em; background: #a6bcd6; transform: rotate(-28deg); }

.chart { width: 668px; }
.chart-bar { height: 209px; }
.chart-scatter { height: 450px; }
.grid-l { fill: none; stroke: #e8e8e8; stroke-width: 1; }
.grid-b { fill: none; stroke: #f0f0f0; stroke-width: 2; }
.grid-z { fill: none; stroke: #e2e2e2; stroke-width: 1.5; }
.bar { fill: #a6bbd5; }
.bar-faint { fill: #e3e8f0; }
.mono-s { font-family: "DejaVu Sans Mono", monospace; font-size: 10.5px; fill: #c8c8c8; }
.mono-m { font-family: "DejaVu Sans Mono", monospace; font-size: 12.5px; fill: #c8c8c8; }
.axis-t { font-size: 11px; fill: #b0b0b0; }
.axis-m { font-size: 12.7px; fill: #b0b0b0; }
.dots { fill: none; stroke: #a6bbd5; stroke-width: 13; stroke-linecap: round; }
.ticks { stroke: #c8c8c8; stroke-width: 1; fill: none; }
.dot-label { font-size: 10.6px; fill: #b8b8b8; }

.map { width: 475px; height: 333px; margin-left: 1px; flex: none; }
.pale { fill: #f7f8ee; }
.sand { fill: #fdfbe8; }
.green { fill: #ecf2e2; }
.coast path { stroke: #a69780; stroke-width: 2; }
.coast .channel { fill: none; stroke: #d0e5fa; stroke-width: 7; }
.bub circle { fill: #7d9bc1; stroke: #8fa6c2; stroke-width: 2; }
.bub-dim { fill: #74787e; }
.scale { fill: none; stroke: #6e6e6e; stroke-width: 3; }
.map-t { font-size: 30px; fill: #555; paint-order: stroke; stroke: #fff; stroke-width: 4px; }
.map-credit { font-size: 29px; }
.map-link { text-decoration: underline; }

.legend { flex: 1; min-height: 0; margin-left: 1px; display: flex; font-size: 11px; line-height: 12px; color: #8c8c8c; }
.leg-col { padding: 1px 5px; border-left: 1px solid #bbb; }
.leg-left { width: 180px; }
.leg-right { flex: 1; padding-right: 4px; }
.leg-name { height: 12px; }
.scale-range { margin: 6px 0 0 60px; display: flex; justify-content: space-between; font-size: 13px; line-height: 14px; color: #a0a0a0; }
.scale-row { display: flex; align-items: center; margin-top: 3px; }
.scale-name { width: 60px; font-size: 14px; color: #a0a0a0; }
.scale-bar { flex: 1; height: 14px; background: linear-gradient(90deg, #fdf6c8, #fdc476 33%, #de8859 66%, #8c6450); }

.snap-grid { position: absolute; left: 0; top: 0; width: 1170px; height: 778px; pointer-events: none; }
.snap-h { fill: none; stroke: #ffc68f; stroke-opacity: .35; stroke-width: 1; }
.snap-v { fill: none; stroke: #ffc68f; stroke-opacity: .35; stroke-width: 1; }

.appnav { height: 49px; flex: none; background: #d8d8d8; border-top: 1px solid #ababab; text-align: center; font-size: 12px; font-weight: 700; color: #777; line-height: 48px; }

/* Properties */
.props { width: 224px; flex: none; background: #fff; display: flex; flex-direction: column; }
.props-head { height: 53px; background: #4d4d4d; border-bottom: 1px solid #6a6a6a; padding: 18px 0 0 12px; flex: none; }
.props-ic { width: 18px; height: 14px; }
.props-section { height: 33px; flex: none; background: #4d4d4d; border-left: 2px solid #f39c2b; color: #fff; font-size: 11.6px; line-height: 32px; padding-left: 7px; }
.props-body { padding: 6px 9px 0 9px; }
.p-label { display: block; height: 16px; line-height: 16px; margin-bottom: 5px; font-size: 11.5px; color: #6e6e6e; }
.p-label:first-child { margin-bottom: 6px; }
.p-input { height: 25px; margin-bottom: 14px; border: 1px solid #b5b5b5; border-radius: 2px; font-size: 11.6px; line-height: 23px; padding-left: 5px; color: #707070; background: #fff; }
.p-expr { display: flex; padding-left: 0; }
.p-expr-box { flex: 1; border-right: 1px solid #b5b5b5; }
.fx { font-family: "Liberation Serif", serif; font-style: italic; font-weight: 700; font-size: 17px; color: #595959; }
.fx-btn { width: 38px; text-align: center; }
.p-area { position: relative; height: 63px; margin-bottom: 14px; border: 1px solid #b5b5b5; border-radius: 2px; display: flex; align-items: flex-end; justify-content: flex-end; padding: 0 12px 10px 0; }
.resize { position: absolute; right: 0; bottom: 0; width: 8px; height: 8px; }
.p-label-tight { margin-bottom: 3px; }
.thumb { position: relative; height: 121px; border: 3px solid #b9b9b9; border-radius: 4px; padding: 0; display: grid; grid-template-columns: 81px 1fr; grid-template-rows: 36px 1fr; gap: 3px; background: #fff; }
.thumb-cell { background: #f0f0f0; display: flex; align-items: center; justify-content: center; }
.wand { width: 20px; height: 16px; }
.thumb-badge { position: absolute; left: 82px; top: 40px; width: 32px; height: 32px; border-radius: 50%; background: #8a8a8a; border: 1px solid #ddd; display: flex; align-items: center; justify-content: center; }
.thumb-pic { width: 16px; height: 12px; }
.p-label-gap { margin-top: 15px; margin-bottom: 5px; }
.p-select { height: 25px; border: 1px solid #b5b5b5; border-radius: 2px; display: flex; align-items: center; justify-content: space-between; padding: 0 9px 0 9px; font-size: 12px; font-weight: 700; color: #595959; }
.caret-dark { margin-left: 0; }
.extend { margin-top: 16px; display: flex; justify-content: space-between; align-items: flex-start; }
.ext-label { font-size: 11.5px; line-height: 16px; color: #6e6e6e; }
.ext-state { margin-top: 5px; font-size: 12px; line-height: 16px; font-weight: 700; color: #595959; }
.toggle { position: relative; width: 38px; height: 12px; margin-top: 11px; border: 1px solid #c4c4c4; border-radius: 6px; background: #fff; }
.toggle-knob { position: absolute; left: -1px; top: -5px; width: 22px; height: 20px; border-radius: 50%; background: linear-gradient(#fafafa, #e4e4e4); border: 1px solid #ccc; }

/* Bottom bar */
.bottombar { height: 33px; flex: none; background: #4d4d4d; border-top: 1px solid #333; border-bottom: 2px solid #444; display: flex; align-items: stretch; padding-left: 683px; }
.bb-btn { width: 42px; display: flex; align-items: center; justify-content: center; }
.bb-ic { width: 18px; height: 18px; }
.bb-sep { width: 1px; background: #5e5e5e; }
.bb-spacer { flex: 1; }
.bb-gap { width: 183px; }
.bb-toggle { width: 40px; background: #464646; display: flex; align-items: center; justify-content: center; }
```
